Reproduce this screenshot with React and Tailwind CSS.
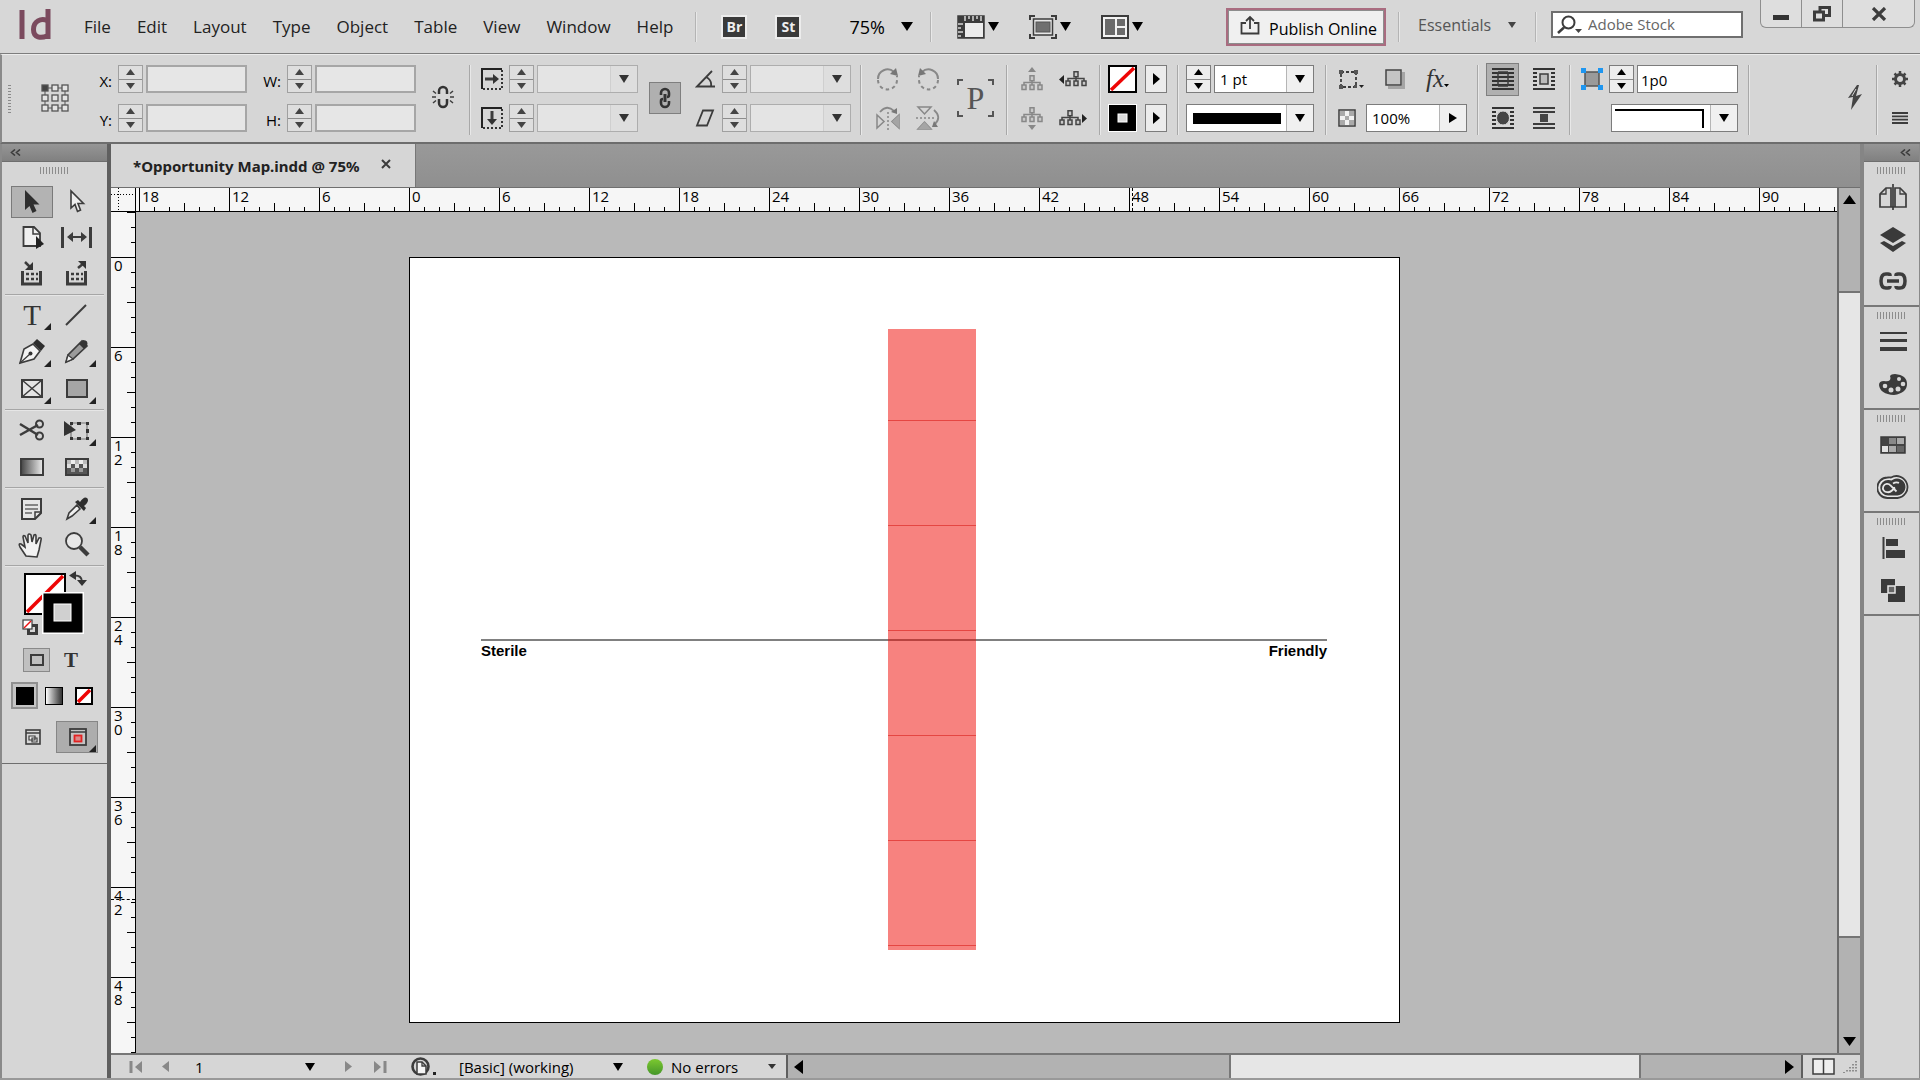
import React from "react";

const MENUS = ["File", "Edit", "Layout", "Type", "Object", "Table", "View", "Window", "Help"];
const H_LABELS = [18, 12, 6, 0, 6, 12, 18, 24, 30, 36, 42, 48, 54, 60, 66, 72, 78, 84, 90];
const V_LABELS = ["", "0", "6", "12", "18", "24", "30", "36", "42", "48"];

function Svg({ w, h, children, className = "" }) {
  return (
    <svg
      width={w}
      height={h}
      viewBox={`0 0 ${w} ${h}`}
      fill="none"
      stroke="#3c3c3c"
      strokeWidth="2"
      aria-hidden="true"
      className={"shrink-0 " + className}
    >
      {children}
    </svg>
  );
}

/* ---------- small shared parts ---------- */

function Down({ w = 12, h = 9, color = "#000", className = "" }) {
  return (
    <Svg w={w} h={h} className={className}>
      <path d={`M0 0H${w}L${w / 2} ${h}Z`} fill={color} stroke="none" />
    </Svg>
  );
}

function Right({ w = 8, h = 12, color = "#000" }) {
  return (
    <Svg w={w} h={h}>
      <path d={`M0 0V${h}L${w} ${h / 2}Z`} fill={color} stroke="none" />
    </Svg>
  );
}

function Left({ w = 8, h = 12, color = "#000" }) {
  return (
    <Svg w={w} h={h}>
      <path d={`M${w} 0V${h}L0 ${h / 2}Z`} fill={color} stroke="none" />
    </Svg>
  );
}

function Up({ w = 12, h = 9, color = "#000" }) {
  return (
    <Svg w={w} h={h}>
      <path d={`M0 ${h}H${w}L${w / 2} 0Z`} fill={color} stroke="none" />
    </Svg>
  );
}

function Sep({ className = "" }) {
  return <div className={"w-[2px] h-[70px] shrink-0 border-l border-[#a8a8a8] bg-[#e8e8e8] " + className} />;
}

function MenuSep({ className = "" }) {
  return <div className={"w-[2px] h-[30px] shrink-0 border-l border-[#b4b4b4] bg-[#e8e8e8] " + className} />;
}

function Spinner({ on, name }) {
  const c = on ? "#000" : "#444";
  return (
    <div
      className={
        "w-[25px] h-7 shrink-0 flex flex-col border " +
        (on ? "border-[#7c7c7c] bg-[#ededed]" : "border-[#a0a0a0] bg-[#dedede]")
      }
    >
      <button aria-label={name + " up"} className="flex-1 flex items-center justify-center">
        <Up w={9} h={6} color={c} />
      </button>
      <button
        aria-label={name + " down"}
        className="flex-1 flex items-center justify-center border-t border-[#8c8c8c]"
      >
        <Down w={9} h={6} color={c} />
      </button>
    </div>
  );
}

function Combo({ name, value = "", on, arrow = "down", className = "w-[101px]" }) {
  return (
    <div
      className={
        "h-7 shrink-0 flex border " +
        (on ? "border-[#7c7c7c] bg-white " : "border-[#adadad] bg-[#e4e4e4] ") +
        className
      }
    >
      <input
        aria-label={name}
        defaultValue={value}
        className="flex-1 min-w-0 bg-transparent px-[5px] pt-px text-[15px] outline-none"
      />
      <button
        aria-label={name + " options"}
        className={
          "w-[27px] shrink-0 flex items-center justify-center border-l " +
          (on ? "border-[#b5b5b5] bg-[#f0f0f0]" : "border-[#cfcfcf] bg-[#dedede]")
        }
      >
        {arrow === "down" ? <Down w={10} h={8} color={on ? "#000" : "#333"} /> : <Right w={8} h={10} />}
      </button>
    </div>
  );
}

function Field({ label, id, w }) {
  return (
    <div className="flex items-center h-7">
      <label htmlFor={id} className={"text-right text-[15px] pt-1 " + w}>
        {label}:
      </label>
      <div className="ml-[6px]">
        <Spinner name={label} />
      </div>
      <input id={id} className="ml-[3px] w-[101px] h-7 border-2 border-[#a6a6a6] bg-[#e6e6e6] px-1 text-[15px] outline-none" />
    </div>
  );
}

function IconButton({ name, children, className = "" }) {
  return (
    <button aria-label={name} className={"shrink-0 flex items-center justify-center " + className}>
      {children}
    </button>
  );
}

/* ---------- menu bar ---------- */

function RulersIcon() {
  return (
    <Svg w={28} h={24}>
      <rect x="1" y="1" width="26" height="22" fill="#3c3c3c" strokeWidth="1.5" />
      <rect x="8" y="8" width="18" height="14" fill="#ececec" stroke="none" />
      <path d="M8 1v5M12 1v3M16 1v5M20 1v3M24 1v5M1 9h5M1 13h3M1 17h5M1 21h3" stroke="#d6d6d6" strokeWidth="1.5" />
    </Svg>
  );
}

function ScreenModeIcon() {
  return (
    <Svg w={28} h={24}>
      <path d="M1 5V1h5M22 1h5v4M27 19v4h-5M6 23H1v-4" />
      <rect x="4.500" y="4" width="19" height="16" strokeWidth="1.5" fill="#e8e8e8" />
      <rect x="7" y="7" width="14" height="10" fill="#707070" stroke="#555" strokeWidth="1" />
    </Svg>
  );
}

function ArrangeIcon() {
  return (
    <Svg w={28} h={24}>
      <rect x="1" y="1" width="26" height="22" fill="#f2f2f2" />
      <path d="M4 4h10v16H4zM16 4h8v7h-8zM16 13h8v7h-8z" fill="#6a6a6a" stroke="none" />
    </Svg>
  );
}

function MenuBar() {
  return (
    <header className="flex items-center h-[54px] shrink-0 border-b border-[#7d7d7d] bg-[#d7d7d7]">
      <svg width="32" height="32" viewBox="0 0 32 32" className="ml-[19px] shrink-0 -mt-1" role="img" aria-label="InDesign">
        <path d="M3 1V30M29 0V30" stroke="#7b4a5e" strokeWidth="5" fill="none" />
        <path d="M28 11.500C22 9 14.500 12 14.500 20.500C14.500 29 22 29.500 28 27" stroke="#7b4a5e" strokeWidth="5" fill="none" />
      </svg>
      <nav className="flex ml-[33px] gap-[26px] text-[17px] text-[#222]">
        {MENUS.map((m) => (
          <button key={m}>{m}</button>
        ))}
      </nav>
      <MenuSep className="ml-[22px]" />
      <button className="ml-6 w-[26px] h-6 border-2 border-[#ececec] bg-[#3a3a3a] text-[14px] leading-4 font-bold text-[#eee]">
        <span className="block -mx-1">Br</span>
      </button>
      <button className="ml-7 w-[26px] h-6 border-2 border-[#ececec] bg-[#3a3a3a] text-[14px] leading-4 font-bold text-[#eee]">
        <span className="block -mx-1">St</span>
      </button>
      <div className="relative ml-12 flex items-center">
        <select aria-label="Zoom level" className="appearance-none w-[64px] text-[18px] leading-6 bg-transparent outline-none">
          <option>75%</option>
        </select>
        <Down w={12} h={9} className="absolute right-0 pointer-events-none" />
      </div>
      <MenuSep className="ml-[17px]" />
      <button aria-label="View options" className="ml-[25px] flex items-center gap-[3px]">
        <RulersIcon />
        <Down w={11} h={9} />
      </button>
      <button aria-label="Screen mode" className="ml-[30px] flex items-center gap-[3px]">
        <ScreenModeIcon />
        <Down w={11} h={9} />
      </button>
      <button aria-label="Arrange documents" className="ml-[30px] flex items-center gap-[3px]">
        <ArrangeIcon />
        <Down w={11} h={9} />
      </button>

      <button className="ml-auto w-[160px] h-[38px] border-[2px] border-[#a96c80] bg-[#f0f0f0] flex items-center pl-3 text-[16px] whitespace-nowrap outline-1 -outline-offset-3 outline-[#8d8d8d]">
        <Svg w={20} h={20} className="-mt-1">
          <path d="M6 8H1.500V18.500H18.500V8H14" strokeWidth="1.800" />
          <path d="M10 14V3M6 6l4-4 4 4" strokeWidth="1.800" />
        </Svg>
        <span className="ml-[9px] pt-1">Publish Online</span>
      </button>
      <MenuSep className="ml-3" />
      <div className="relative ml-[18px] flex items-center -mt-1">
        <select aria-label="Workspace" className="appearance-none w-[98px] text-[16px] text-[#555] bg-transparent outline-none">
          <option>Essentials</option>
        </select>
        <Down w={8} h={6} color="#444" className="absolute right-0 pointer-events-none" />
      </div>
      <MenuSep className="ml-[19px]" />
      <div className="ml-[14px] w-[192px] h-[27px] -mt-1 border-2 border-[#6f6f6f] bg-white flex items-center pl-1">
        <Svg w={27} h={19}>
          <circle cx="11.500" cy="7.500" r="6" />
          <path d="M7 12.500L1 18" strokeWidth="2.500" />
          <path d="M18 14h7l-3.500 4z" fill="#444" stroke="none" />
        </Svg>
        <input
          aria-label="Search Adobe Stock"
          placeholder="Adobe Stock"
          className="ml-1 flex-1 min-w-0 bg-transparent text-[15px] placeholder:text-[#666] outline-none"
        />
      </div>
      <div className="self-start ml-[17px] mr-[5px] flex h-7 border border-t-0 border-[#8e8e8e] rounded-b-md divide-x divide-[#8e8e8e] bg-[#dedede]">
        <IconButton name="Minimize" className="w-[41px]">
          <Svg w={16} h={6} className="mt-2">
            <rect x="0" y="0" width="16" height="5" fill="#333" stroke="none" />
          </Svg>
        </IconButton>
        <IconButton name="Restore" className="w-[41px]">
          <Svg w={18} h={16}>
            <path d="M7 5V1.500H16.500V9.500H12" strokeWidth="3" />
            <rect x="1.500" y="6" width="9" height="8" strokeWidth="3" />
          </Svg>
        </IconButton>
        <IconButton name="Close" className="w-[71px]">
          <Svg w={16} h={14}>
            <path d="M2 1l12 12M14 1L2 13" strokeWidth="3.200" />
          </Svg>
        </IconButton>
      </div>
    </header>
  );
}

/* ---------- control bar ---------- */

function RefPoint() {
  return (
    <Svg w={28} h={28}>
      <path d="M4 4h20v20H4z" strokeWidth="1" stroke="#555" />
      {[4, 14, 24].map((y) =>
        [4, 14, 24].map((x) => (
          <rect
            key={x + "-" + y}
            x={x - 3}
            y={y - 3}
            width="6"
            height="6"
            strokeWidth="1.300"
            stroke="#555"
            fill={x === 4 && y === 4 ? "#444" : "#e4e4e4"}
          />
        ))
      )}
    </Svg>
  );
}

function ScaleIcon({ vertical }) {
  return (
    <Svg w={22} h={22}>
      <path d={vertical ? "M21 1H1V21" : "M1 21V1H21"} stroke="#222" />
      <path d="M21 2V21H2" stroke="#333" strokeDasharray="2 2" />
      {vertical ? (
        <path d="M11 4V14" strokeWidth="3" />
      ) : (
        <path d="M4 11H13" strokeWidth="3" />
      )}
      <path d={vertical ? "M6 12h10l-5 6z" : "M12 6v10l6-5z"} fill="#333" stroke="none" />
    </Svg>
  );
}

function BrokenLink() {
  return (
    <Svg w={22} h={24}>
      <path d="M7 9V6a4 4 0 0 1 8 0V9M7 14v4a4 4 0 0 0 8 0V14" strokeWidth="2.500" stroke="#333" />
      <path d="M1 6l3 2.500M0 12h4M1 18l3-2.500M21 6l-3 2.500M22 12h-4M21 18l-3-2.500" strokeWidth="1.500" />
    </Svg>
  );
}

function ChainIcon() {
  return (
    <Svg w={14} h={22}>
      <path d="M3 8V6a4 4 0 0 1 8 0v2q0 2-2 2M11 14v2a4 4 0 0 1-8 0v-2q0-2 2-2" strokeWidth="2.600" stroke="#333" />
      <path d="M7 7v8" strokeWidth="3" stroke="#333" />
    </Svg>
  );
}

function RotateIcon({ ccw }) {
  return (
    <Svg w={24} h={24} className={ccw ? "-scale-x-100" : ""}>
      <path d="M2 12a9.500 9.500 0 0 1 16-7" stroke="#888" />
      <path d="M2 13a9.500 9.500 0 0 0 19 0V9" stroke="#888" strokeDasharray="3.500 3" />
      <path d="M14 7l6-6 2 8z" fill="#777" stroke="none" />
    </Svg>
  );
}

function FlipIcon({ vertical }) {
  return (
    <Svg w={24} h={24} className={vertical ? "rotate-90" : ""}>
      <path d="M1 9v13l7-6.500zM23 9v13l-7-6.500z" stroke="#888" strokeWidth="1.500" />
      <path d="M23 9v13l-7-6.500z" fill="#a5a5a5" stroke="none" />
      <path d="M12 6v18" stroke="#888" strokeDasharray="2 2" strokeWidth="1.500" />
      <path d="M4 6q7-8 14-1" stroke="#888" strokeWidth="1.800" />
      <path d="M15 6l6-4 0 6z" fill="#777" stroke="none" />
    </Svg>
  );
}

function Tree({ c, x, y }) {
  return (
    <g stroke={c} strokeWidth="1.500" fill="#c9c9c9">
      <path d={`M${x + 11} ${y + 5}V${y + 10}M${x + 3} ${y + 10}V${y + 7.5}H${x + 19}V${y + 10}`} fill="none" />
      <rect x={x + 9} y={y + 0.75} width="4" height="5" />
      <rect x={x + 1} y={y + 10} width="4" height="4.500" />
      <rect x={x + 9} y={y + 10} width="4" height="4.500" />
      <rect x={x + 17} y={y + 10} width="4" height="4.500" />
    </g>
  );
}

function WrapLines({ gap }) {
  const ys = [1, 5, 9, 13, 17, 21];
  return (
    <g stroke="#333">
      {ys.map((y, i) =>
        i === 0 || i === 5 || !gap ? (
          <path key={y} d={`M0 ${y}H22`} />
        ) : (
          <path key={y} d={`M0 ${y}H${gap}M${22 - gap} ${y}H22`} />
        )
      )}
    </g>
  );
}

function NoneSwatch({ w, h }) {
  return (
    <Svg w={w} h={h}>
      <rect x="1" y="1" width={w - 2} height={h - 2} fill="#fff" stroke="#000" />
      <path d={`M3 ${h - 3}L${w - 3} 3`} stroke="#ee0505" strokeWidth="3.500" />
    </Svg>
  );
}

function ArrowButton({ name }) {
  return (
    <IconButton name={name} className="w-[22px] h-7 border border-[#7c7c7c] bg-[#ececec]">
      <Right w={7} h={12} />
    </IconButton>
  );
}

function Rows({ children, className = "" }) {
  return <div className={"flex flex-col gap-[11px] shrink-0 " + className}>{children}</div>;
}

function Row({ children, className = "" }) {
  return <div className={"flex items-center h-7 " + className}>{children}</div>;
}

function ControlBar() {
  return (
    <section
      aria-label="Control"
      className="flex items-start h-[90px] shrink-0 pt-[10px] border-t border-l-2 border-t-[#ececec] border-l-[#8a8a8a] border-b-2 border-b-[#6d6d6d] bg-[#d6d6d6] overflow-hidden"
    >
      <div className="ml-[6px] mt-5 w-[3px] h-7 shrink-0 bg-[repeating-linear-gradient(180deg,#8a8a8a_0_1px,transparent_1px_3px)]" />
      <IconButton name="Reference point" className="ml-[30px] mt-[19px]">
        <RefPoint />
      </IconButton>
      <Rows className="ml-[25px]">
        <Field label="X" id="pos-x" w="w-[18px]" />
        <Field label="Y" id="pos-y" w="w-[18px]" />
      </Rows>
      <Rows className="ml-[14px]">
        <Field label="W" id="size-w" w="w-5" />
        <Field label="H" id="size-h" w="w-5" />
      </Rows>
      <IconButton name="Constrain proportions" className="ml-4 mt-5">
        <BrokenLink />
      </IconButton>
      <Sep className="ml-[15px]" />
      <Rows className="ml-[10px]">
        {[false, true].map((v) => (
          <Row key={String(v)}>
            <ScaleIcon vertical={v} />
            <div className="ml-[6px] mr-[3px]">
              <Spinner name={v ? "Scale Y" : "Scale X"} />
            </div>
            <Combo name={v ? "Scale Y" : "Scale X"} />
          </Row>
        ))}
      </Rows>
      <IconButton name="Link scaling" className="ml-[11px] mt-[17px] w-8 h-8 border border-[#7f7f7f] bg-[#b0b0b0]">
        <ChainIcon />
      </IconButton>
      <Rows className="ml-[14px]">
        <Row>
          <Svg w={21} h={18}>
            <path d="M17 1L2 16.500H20M11 7q6 3 5 9" strokeWidth="1.800" />
          </Svg>
          <div className="ml-[6px] mr-[3px]">
            <Spinner name="Rotation" />
          </div>
          <Combo name="Rotation" />
        </Row>
        <Row>
          <Svg w={21} h={18}>
            <path d="M2 16.500L8 1.500H18L12 16.500Z" strokeWidth="1.800" />
          </Svg>
          <div className="ml-[6px] mr-[3px]">
            <Spinner name="Shear" />
          </div>
          <Combo name="Shear" />
        </Row>
      </Rows>
      <Sep className="ml-[9px]" />
      <Rows className="ml-[14px]">
        <Row className="gap-4">
          <IconButton name="Rotate clockwise"><RotateIcon /></IconButton>
          <IconButton name="Rotate counter-clockwise"><RotateIcon ccw /></IconButton>
        </Row>
        <Row className="gap-4">
          <IconButton name="Flip horizontal"><FlipIcon /></IconButton>
          <IconButton name="Flip vertical"><FlipIcon vertical /></IconButton>
        </Row>
      </Rows>
      <div className="ml-[17px] mt-[14px] w-[37px] h-[38px] shrink-0 grid place-items-center">
        <Svg w={37} h={38} className="col-start-1 row-start-1">
          <path d="M1 6V1H6M31 1H36V6M36 32V37H31M6 37H1V32" stroke="#555" />
        </Svg>
        <span className="col-start-1 row-start-1 font-['Liberation_Serif',serif] text-[32px] leading-none text-[#555]">P</span>
      </div>
      <Sep className="ml-3" />
      <Rows className="ml-[13px]">
        <Row className="gap-4">
          <IconButton name="Select container">
            <Svg w={22} h={24}>
              <path d="M7 5h8l-4-5z" fill="#888" stroke="none" />
              <Tree c="#888" x={0} y={8} />
            </Svg>
          </IconButton>
          <IconButton name="Select previous object">
            <Svg w={28} h={16}>
              <path d="M5 4v9L0 8.500z" fill="#222" stroke="none" />
              <Tree c="#444" x={6} y={0} />
            </Svg>
          </IconButton>
        </Row>
        <Row className="gap-4">
          <IconButton name="Select content">
            <Svg w={22} h={24}>
              <Tree c="#888" x={0} y={1} />
              <path d="M7 19h8l-4 5z" fill="#888" stroke="none" />
            </Svg>
          </IconButton>
          <IconButton name="Select next object">
            <Svg w={28} h={16}>
              <Tree c="#444" x={0} y={0} />
              <path d="M23 4v9l5-4.500z" fill="#222" stroke="none" />
            </Svg>
          </IconButton>
        </Row>
      </Rows>
      <Sep className="ml-3" />
      <Rows className="ml-[7px]">
        <Row className="gap-2">
          <IconButton name="Fill"><NoneSwatch w={29} h={28} /></IconButton>
          <ArrowButton name="Fill options" />
        </Row>
        <Row className="gap-2">
          <IconButton name="Stroke">
            <Svg w={29} h={28}>
              <rect x="0" y="0" width="29" height="28" fill="#fff" stroke="none" />
              <rect x="1" y="1" width="27" height="26" fill="#000" stroke="none" />
              <rect x="10" y="10" width="9" height="8" fill="#ddd" stroke="#fff" strokeWidth="1" />
            </Svg>
          </IconButton>
          <ArrowButton name="Stroke options" />
        </Row>
      </Rows>
      <Sep className="ml-[10px]" />
      <Rows className="ml-[7px]">
        <Row className="gap-[3px]">
          <Spinner on name="Stroke weight" />
          <Combo on name="Stroke weight" value="1 pt" className="w-[100px]" />
        </Row>
        <Row>
          <button aria-label="Stroke type" className="w-32 h-7 flex border border-[#7c7c7c] bg-white">
            <span className="flex-1 self-center h-[11px] ml-[6px] mr-[5px] bg-black" />
            <span className="w-[27px] self-stretch flex items-center justify-center border-l border-[#b5b5b5] bg-[#f0f0f0]">
              <Down w={10} h={8} />
            </span>
          </button>
        </Row>
      </Rows>
      <Sep className="ml-[11px]" />
      <Rows className="ml-[11px]">
        <Row>
          <IconButton name="Corner options">
            <Svg w={26} h={20}>
              <rect x="3" y="3" width="15" height="15" strokeDasharray="3 2" strokeWidth="1.800" />
              <path d="M1 1h4v4H1zM16 1h4v4h-4zM1 16h4v4H1zM16 16h3v3h-3z" fill="#555" stroke="none" />
              <path d="M21 16h5l-2.500 3z" fill="#222" stroke="none" />
            </Svg>
          </IconButton>
          <IconButton name="Drop shadow" className="ml-5">
            <Svg w={22} h={22}>
              <path d="M4 19.500H19.500V4" strokeWidth="3" stroke="#a5a5a5" />
              <rect x="2" y="2" width="15" height="15" fill="#c4c4c4" strokeWidth="1.500" stroke="#444" />
            </Svg>
          </IconButton>
          <button aria-label="Effects" className="ml-5 flex items-end h-7">
            <span className="font-['Liberation_Serif',serif] italic text-[25px] leading-7 text-[#333]">fx</span>
            <Down w={5} h={3} className="mb-[6px]" />
          </button>
        </Row>
        <Row>
          <Svg w={18} h={18}>
            <rect x="1" y="1" width="16" height="16" fill="#f2f2f2" strokeWidth="1.500" />
            <path d="M2 2h5v5H2zM11 2h5v5h-5zM7 7h4v4H7zM2 11h5v5H2zM11 11h5v5h-5z" fill="#aaa" stroke="none" />
          </Svg>
          <Combo on name="Opacity" value="100%" arrow="right" className="ml-[10px] w-[101px]" />
        </Row>
      </Rows>
      <Sep className="ml-[10px]" />
      <Rows className="ml-[7px]">
        <Row className="gap-2">
          <IconButton name="No text wrap" className="w-[33px] h-[33px] border border-[#7f7f7f] bg-[#b0b0b0]">
            <Svg w={22} h={22}>
              <WrapLines />
              <path d="M6 4v14M16 4v14M6 4h10M6 18h10" strokeWidth="1.500" />
            </Svg>
          </IconButton>
          <IconButton name="Wrap around bounding box" className="w-[33px] h-7">
            <Svg w={22} h={22}>
              <WrapLines gap={4} />
              <rect x="7" y="6" width="8" height="10" fill="#bbb" strokeWidth="1.500" />
            </Svg>
          </IconButton>
        </Row>
        <Row className="gap-2">
          <IconButton name="Wrap around object shape" className="w-[33px] h-7">
            <Svg w={22} h={22}>
              <WrapLines gap={4} />
              <ellipse cx="11" cy="11" rx="6.500" ry="7" fill="#444" stroke="#d6d6d6" strokeWidth="1" />
            </Svg>
          </IconButton>
          <IconButton name="Jump object" className="w-[33px] h-7">
            <Svg w={22} h={22}>
              <path d="M0 1H22M0 5H22M0 17H22M0 21H22" />
              <rect x="7" y="7" width="8" height="8" fill="#444" stroke="none" />
            </Svg>
          </IconButton>
        </Row>
      </Rows>
      <Sep className="ml-[9px]" />
      <Rows className="ml-[10px]">
        <Row>
          <Svg w={22} h={22}>
            <rect x="4" y="4" width="14" height="14" fill="#9a9a9a" strokeWidth="1.500" stroke="#555" />
            <path d="M0 0h5v5H0zM17 0h5v5h-5zM0 17h5v5H0zM17 17h5v5h-5z" fill="#1e96f0" stroke="none" />
          </Svg>
          <div className="ml-[6px] mr-[3px]">
            <Spinner on name="Corner size" />
          </div>
          <input
            aria-label="Corner size"
            defaultValue="1p0"
            className="w-[101px] h-7 border border-[#7c7c7c] bg-white px-[3px] pt-px text-[15px] outline-none"
          />
        </Row>
        <Row>
          <button aria-label="Corner shape" className="ml-[30px] w-[127px] h-7 flex border border-[#7c7c7c] bg-white">
            <span className="flex-1 self-stretch mt-1 mb-[3px] ml-[3px] mr-[6px] border-t-2 border-r-2 border-black" />
            <span className="w-[27px] self-stretch flex items-center justify-center border-l border-[#b5b5b5] bg-[#f0f0f0]">
              <Down w={10} h={8} />
            </span>
          </button>
        </Row>
      </Rows>
      <Sep className="ml-[10px]" />
      <IconButton name="Quick apply" className="ml-auto mt-5">
        <Svg w={16} h={25}>
          <path d="M10 0L1 13l5-1L4 25L15 9l-6 2L12 0z" fill="#444" stroke="none" />
          <path d="M9 4L5 11" stroke="#d6d6d6" strokeWidth="1" />
        </Svg>
      </IconButton>
      <Sep className="ml-[13px]" />
      <Rows className="ml-[14px] mr-3">
        <Row>
          <IconButton name="Customize">
            <Svg w={16} h={16}>
              <circle cx="8" cy="8" r="4.500" strokeWidth="3" stroke="#444" />
              <path d="M8 0v3M8 13v3M0 8h3M13 8h3M2.500 2.500l2 2M11.500 11.500l2 2M13.500 2.500l-2 2M4.500 11.500l-2 2" stroke="#444" strokeWidth="2.500" />
            </Svg>
          </IconButton>
        </Row>
        <Row>
          <IconButton name="Control menu">
            <Svg w={16} h={12}>
              <path d="M0 1H16M0 4.300H16M0 7.600H16M0 11H16" strokeWidth="1.800" />
            </Svg>
          </IconButton>
        </Row>
      </Rows>
    </section>
  );
}

/* ---------- toolbox ---------- */

function Corner() {
  return <path d="M40 24v7h-7z" fill="#222" stroke="none" />;
}

function Tool({ name, active, children }) {
  return (
    <button
      aria-label={name}
      className={"w-[42px] h-8 shrink-0 " + (active ? "bg-[#b3b3b3] outline-1 -outline-offset-1 outline-[#7a7a7a]" : "")}
    >
      <Svg w={42} h={32}>{children}</Svg>
    </button>
  );
}

function Grip() {
  return (
    <div className="w-[29px] h-[7px] mx-auto bg-[repeating-linear-gradient(90deg,#8c8c8c_0_1px,transparent_1px_3px)]" />
  );
}

function PanelHeader({ className = "" }) {
  return (
    <div className={"h-[18px] shrink-0 flex items-center px-2 border-b border-[#6e6e6e] bg-linear-to-b from-[#969696] to-[#808080] " + className}>
      <button aria-label="Collapse panels">
        <Svg w={11} h={7}>
          <path d="M5 0.500L1.500 3.500L5 6.500M10 0.500L6.500 3.500L10 6.500" strokeWidth="1.600" />
        </Svg>
      </button>
    </div>
  );
}

function Rule({ className = "" }) {
  return <div className={"mx-[3px] h-[2px] border-t border-[#a6a6a6] bg-[#e6e6e6] " + className} />;
}

const GRID = "grid grid-cols-[42px_42px] gap-x-[3px] ml-[9px] ";

function Toolbox() {
  return (
    <aside className="w-[111px] shrink-0 flex flex-col border-l-2 border-[#8a8a8a] border-r-4 border-r-[#5f5f5f] bg-[#d6d6d6]">
      <PanelHeader />
      <div className="mt-[5px]">
        <Grip />
      </div>
      <div className={GRID + "gap-y-1 mt-3"}>
        <Tool name="Selection" active>
          <path d="M14 4V24L18.500 20L21.500 27L25.500 25L22.500 18.500H28.500Z" fill="#2e2e2e" stroke="none" />
        </Tool>
        <Tool name="Direct selection">
          <path d="M15 5V22L19 18.500L21.500 25.500L24.500 24L22 17.500H27.500Z" fill="#eee" strokeWidth="1.600" />
        </Tool>
        <Tool name="Page">
          <path d="M12.500 5H23L29 11V24H12.500Z" fill="#efefef" strokeWidth="1.800" />
          <path d="M22 5V12H29" strokeWidth="1.500" />
          <path d="M25 14V27L33 22Z" fill="#222" stroke="none" />
        </Tool>
        <Tool name="Gap">
          <path d="M6.500 5V26M34.500 5V26" strokeWidth="3" />
          <path d="M13 15H29" />
          <path d="M17 10L11 15L17 20ZM25 10L31 15L25 20Z" fill="#3c3c3c" stroke="none" />
        </Tool>
        <Tool name="Content collector">
          <path d="M11.500 13V26H29.500V13" strokeWidth="3" />
          <path d="M15 16H27M15 21H27" strokeWidth="2.500" strokeDasharray="3 2" />
          <path d="M14 4L20 10" strokeWidth="2.500" />
          <path d="M22 4V12H14Z" fill="#333" stroke="none" />
        </Tool>
        <Tool name="Content placer">
          <path d="M11.500 13V26H29.500V13" strokeWidth="3" />
          <path d="M15 16H27M15 21H27" strokeWidth="2.500" strokeDasharray="3 2" />
          <path d="M22 10L28 5" strokeWidth="2.500" />
          <path d="M30 3V11L22 3Z" fill="#333" stroke="none" />
        </Tool>
      </div>
      <Rule className="mt-1" />
      <div className={GRID + "gap-y-[5px] mt-[3px]"}>
        <button aria-label="Type" className="w-[42px] h-8 grid place-items-center">
          <span className="col-start-1 row-start-1 font-['Liberation_Serif',serif] text-[29px] leading-none text-[#333]">T</span>
          <Svg w={42} h={32} className="col-start-1 row-start-1"><Corner /></Svg>
        </button>
        <Tool name="Line">
          <path d="M10 26L30 6" />
        </Tool>
        <Tool name="Pen">
          <path d="M9 27L13 13L22 8L29 15L23 23Z" fill="#f4f4f4" strokeWidth="1.600" />
          <path d="M9 27L19 18" strokeWidth="1.300" />
          <circle cx="19.500" cy="17.500" r="2" fill="#333" stroke="none" />
          <path d="M22 7L26 3L34 10L30 15Z" fill="#2e2e2e" stroke="none" />
          <Corner />
        </Tool>
        <Tool name="Pencil">
          <path d="M10 26L12 19L26 5L31 10L17 23Z" fill="#9b9b9b" strokeWidth="1.600" />
          <path d="M10 26L12 19L17 23Z" fill="#f2f2f2" strokeWidth="1.300" />
          <path d="M23 8L27 4Q33 4 31 10L28 13Z" fill="#333" stroke="none" />
          <Corner />
        </Tool>
        <Tool name="Rectangle frame">
          <rect x="11" y="7" width="20" height="17" fill="#e4e4e4" />
          <path d="M11 7L31 24M31 7L11 24" strokeWidth="1.500" />
          <Corner />
        </Tool>
        <Tool name="Rectangle">
          <rect x="11" y="7" width="20" height="17" fill="#a6a6a6" />
          <Corner />
        </Tool>
      </div>
      <Rule className="mt-1" />
      <div className={GRID + "gap-y-1 mt-1"}>
        <Tool name="Scissors">
          <path d="M9 9L27 20M9 20L27 10" strokeWidth="2.500" />
          <circle cx="28.500" cy="9" r="3.500" />
          <circle cx="28.500" cy="21" r="3.500" />
        </Tool>
        <Tool name="Free transform">
          <path d="M15 8H31V24H15Z" strokeWidth="1.200" stroke="#777" />
          <path d="M8 6V21L20 15Z" fill="#333" stroke="none" />
          <path d="M14 7h3v3h-3zM21 7h4v3h-4zM30 7h3v3h-3zM30 14h3v4h-3zM30 22h3v3h-3zM21 22h4v3h-4zM14 22h3v3h-3z" fill="#333" stroke="none" />
          <Corner />
        </Tool>
        <Tool name="Gradient swatch">
          <defs>
            <linearGradient id="grad-tool">
              <stop offset="0" stopColor="#444" />
              <stop offset="1" stopColor="#eee" />
            </linearGradient>
          </defs>
          <rect x="10" y="8" width="22" height="16" fill="url(#grad-tool)" />
        </Tool>
        <Tool name="Gradient feather">
          <rect x="10" y="8" width="22" height="16" fill="#555" />
          <path d="M15 9h4v4h-4zM23 9h4v4h-4z" fill="#eee" stroke="none" />
          <path d="M11 9h4v4h-4zM19 9h4v4h-4zM27 9h4v4h-4z" fill="#bbb" stroke="none" />
          <path d="M11 13h4v4h-4zM19 13h4v4h-4zM27 13h4v4h-4z" fill="#ddd" stroke="none" />
          <path d="M15 17h4v4h-4zM23 17h4v4h-4z" fill="#999" stroke="none" />
        </Tool>
      </div>
      <Rule className="mt-1" />
      <div className={GRID + "gap-y-1 mt-1"}>
        <Tool name="Note">
          <path d="M11 6H30V20L24 26H11Z" fill="#e6e6e6" />
          <path d="M30 19H24V26" strokeWidth="1.500" />
          <path d="M14 12H27M14 16H27M14 20H21" strokeWidth="1.500" stroke="#666" />
        </Tool>
        <Tool name="Eyedropper">
          <path d="M11 26L13 20L21 12L24 16L16 23Z" fill="#f0f0f0" strokeWidth="1.600" />
          <path d="M19 9L28 18L30 15L28 13Q34 8 31 5Q28 3 24 9L22 7Z" fill="#2e2e2e" stroke="none" />
          <Corner />
        </Tool>
        <Tool name="Hand">
          <path
            d="M15 27L9 18Q7 14 10 15L14 18L12 8Q12 6 14 7L17 14V6Q18 4 20 6L21 13L23 6Q25 5 25 7V15L28 9Q31 8 30 11L28 21L26 28Z"
            fill="#f2f2f2"
            strokeWidth="1.600"
          />
        </Tool>
        <Tool name="Zoom">
          <circle cx="18" cy="12" r="8" fill="#e8e8e8" strokeWidth="1.800" />
          <path d="M24 18L32 26" strokeWidth="4.500" />
        </Tool>
      </div>
      <Rule className="mt-1" />
      <div className="relative h-[66px] mt-[5px]">
        <button aria-label="Fill colour" className="absolute left-[22px] top-px">
          <NoneSwatch w={42} h={42} />
        </button>
        <button aria-label="Stroke colour" className="absolute left-10 top-5">
          <Svg w={42} h={42}>
            <rect x="0" y="0" width="42" height="42" fill="#fff" stroke="none" />
            <rect x="2" y="2" width="38" height="38" fill="#000" stroke="#000" strokeWidth="1" />
            <rect x="12" y="12" width="17" height="17" fill="#d0d0d0" stroke="#fff" strokeWidth="1" />
          </Svg>
        </button>
        <button aria-label="Swap fill and stroke" className="absolute left-[67px] -top-px">
          <Svg w={18} h={16}>
            <path d="M5 4.500Q13 4 13 11" />
            <path d="M7 0V9L0 4.500ZM8 9H18L13 15Z" fill="#333" stroke="none" />
          </Svg>
        </button>
        <button aria-label="Default fill and stroke" className="absolute left-5 top-[47px]">
          <Svg w={16} h={16}>
            <rect x="6.500" y="6.500" width="8" height="8" strokeWidth="3" />
            <rect x="1" y="1" width="9" height="9" fill="#fff" strokeWidth="1.200" />
            <path d="M2 9L9 2" stroke="#e11" strokeWidth="1.500" />
          </Svg>
        </button>
      </div>
      <div className="flex items-center h-6 mt-[10px] ml-[21px]">
        <IconButton name="Formatting affects container" className="w-[27px] h-6 border border-[#8a8a8a] bg-[#c0c0c0]">
          <Svg w={14} h={12}>
            <rect x="1" y="1" width="12" height="10" />
          </Svg>
        </IconButton>
        <button aria-label="Formatting affects text" className="ml-[14px] font-['Liberation_Serif',serif] font-bold text-[21px] leading-none text-[#333]">
          T
        </button>
      </div>
      <div className="flex items-center h-[27px] mt-[10px] ml-[9px]">
        <IconButton name="Apply colour" className="w-[27px] h-[27px] border-2 border-[#909090] bg-[#c4c4c4]">
          <span className="w-[18px] h-[18px] bg-black" />
        </IconButton>
        <button aria-label="Apply gradient" className="ml-[7px] w-[18px] h-[18px] border border-black bg-linear-to-r from-white to-[#333]" />
        <IconButton name="Apply none" className="ml-3">
          <NoneSwatch w={18} h={18} />
        </IconButton>
      </div>
      <div className="flex items-center h-8 mt-[12px] ml-[9px]">
        <IconButton name="Normal view" className="ml-[14px] w-4">
          <Svg w={16} h={16}>
            <rect x="1" y="1" width="14" height="14" fill="#d8d8d8" strokeWidth="1.600" />
            <path d="M1 4H15" strokeWidth="1.500" />
            <path d="M4 7h6v4H4zM7 9h5v4H7z" strokeWidth="1.200" fill="#eee" />
          </Svg>
        </IconButton>
        <button aria-label="Preview mode" className="ml-[15px] w-[42px] h-8 bg-[#adadad] outline-1 -outline-offset-1 outline-[#868686]">
          <Svg w={42} h={32}>
            <rect x="14" y="8" width="16" height="16" fill="#c4c4c4" strokeWidth="1.800" />
            <path d="M14 11H30" strokeWidth="1.500" />
            <rect x="18.500" y="14.500" width="7" height="6" fill="#d88" stroke="#e32222" strokeWidth="1.800" />
            <Corner />
          </Svg>
        </button>
      </div>
      <div className="mt-[10px] border-t border-[#6e6e6e] flex-1" />
    </aside>
  );
}

/* ---------- rulers, canvas, document ---------- */

const TICKS = [1, 2, 3, 4, 5];

function HRuler() {
  return (
    <div className="relative flex-1 min-w-0 h-6 overflow-hidden border-b border-black bg-[#f6f6f6]">
      <div className="flex h-full pl-[3px]">
        {H_LABELS.map((n, i) => (
          <div key={i} className="w-[90px] h-full shrink-0 border-l border-black grid">
            <span className="col-start-1 row-start-1 pl-[2px] text-[15px] leading-4">{n}</span>
            <div className="col-start-1 row-start-1 flex items-end">
              {TICKS.map((k) => (
                <div key={k} className={"w-[15px] border-r border-black " + (k === 3 ? "h-2" : "h-1")} />
              ))}
            </div>
          </div>
        ))}
      </div>
      <div className="absolute left-[996px] inset-y-0 border-l border-dashed border-black" />
    </div>
  );
}

function VRuler() {
  return (
    <div className="relative w-[25px] shrink-0 overflow-hidden border-r border-black bg-[#f6f6f6]">
      <div className="absolute inset-x-0 -top-[45px]">
        {V_LABELS.map((n, i) => (
          <div key={i} className="h-[90px] border-t border-black flex justify-between">
            <div className="ml-[3px] w-[9px] break-all text-[15px] leading-[14px]">{n}</div>
            <div className="flex flex-col items-end">
              {TICKS.map((k) => (
                <div key={k} className={"h-[15px] border-b border-black " + (k === 3 ? "w-2" : "w-1")} />
              ))}
            </div>
          </div>
        ))}
      </div>
      <div className="absolute inset-x-0 top-[687px] border-t border-dashed border-black" />
    </div>
  );
}

function Canvas() {
  return (
    <main className="relative flex-1 min-w-0 overflow-hidden bg-[#b9b9b9]">
      <div className="absolute left-[273px] top-[45px] w-[991px] h-[766px] border border-black bg-white font-['Liberation_Sans',Arial,sans-serif]">
        <div className="absolute left-[71px] top-[381px] w-[846px]">
          <div className="h-[2px] bg-[#808080]" />
          <div className="flex justify-between pt-px text-[15px] leading-[17px] font-bold text-black">
            <span>Sterile</span>
            <span>Friendly</span>
          </div>
        </div>
        <div className="absolute left-[478px] top-[71px] w-[88px] flex flex-col bg-[#f00600]/50">
          <div className="h-[92px] border-b border-[#dd2c28]/70" />
          {[1, 2, 3, 4, 5].map((k) => (
            <div key={k} className="h-[105px] border-b border-[#dd2c28]/70" />
          ))}
          <div className="h-1" />
        </div>
      </div>
    </main>
  );
}

function VScroll() {
  return (
    <div className="w-[23px] shrink-0 flex flex-col border-l-2 border-[#6a6a6a] bg-[#b2b2b2]">
      <button aria-label="Scroll up" className="h-[22px] flex items-center justify-center">
        <Up w={13} h={9} />
      </button>
      <div className="grow-[81] basis-0" />
      <div className="grow-[647] basis-0 border-y-2 border-[#747474] bg-[#e6e6e6]" />
      <div className="grow-[92] basis-0" />
      <button aria-label="Scroll down" className="h-6 flex items-center justify-center">
        <Down w={13} h={9} />
      </button>
    </div>
  );
}

function StatusBar() {
  return (
    <footer className="flex items-center h-[25px] shrink-0 border-t-2 border-[#777] bg-[#d6d6d6] text-[15px]">
      <IconButton name="First page" className="ml-[18px]">
        <Svg w={14} h={12}>
          <path d="M2 0V12" stroke="#888" strokeWidth="3" />
          <path d="M13 0V12L6 6Z" fill="#888" stroke="none" />
        </Svg>
      </IconButton>
      <IconButton name="Previous page" className="ml-[19px]"><Left w={7} h={11} color="#888" /></IconButton>
      <div className="relative ml-[26px] flex items-center">
        <select aria-label="Page" className="appearance-none w-[120px] leading-5 bg-transparent outline-none">
          <option>1</option>
        </select>
        <Down w={10} h={8} className="absolute right-0 pointer-events-none" />
      </div>
      <IconButton name="Next page" className="ml-[30px]"><Right w={7} h={11} color="#888" /></IconButton>
      <IconButton name="Last page" className="ml-[21px]">
        <Svg w={14} h={12}>
          <path d="M12 0V12" stroke="#888" strokeWidth="3" />
          <path d="M1 0V12L8 6Z" fill="#888" stroke="none" />
        </Svg>
      </IconButton>
      <IconButton name="Open structure" className="ml-6">
        <Svg w={26} h={20}>
          <circle cx="9.500" cy="9.500" r="8" strokeWidth="2.600" />
          <path d="M6 5H11L15 9V17H6Z" fill="#f4f4f4" strokeWidth="1.500" />
          <path d="M11 5V9H15" strokeWidth="1.300" />
          <rect x="22" y="15" width="3" height="3" fill="#222" stroke="none" />
        </Svg>
      </IconButton>
      <div className="relative ml-[22px] flex items-center">
        <select aria-label="Preflight profile" className="appearance-none w-[164px] leading-5 bg-transparent outline-none">
          <option>[Basic] (working)</option>
        </select>
        <Down w={10} h={8} className="absolute right-0 pointer-events-none" />
      </div>
      <span className="ml-6 w-4 h-4 rounded-full bg-linear-to-b from-[#7cc92f] to-[#45962a]" />
      <button className="ml-2 flex items-center">
        <span className="w-[97px] text-left leading-5">No errors</span>
        <Down w={8} h={5} color="#333" />
      </button>
      <div className="ml-[10px] flex-1 self-stretch flex border-x-2 border-[#5f5f5f] bg-[#b2b2b2]">
        <button aria-label="Scroll left" className="w-5 flex items-center justify-center"><Left w={9} h={14} /></button>
        <div className="grow-[423] basis-0" />
        <div className="grow-[410] basis-0 border-x-2 border-[#777] bg-[#e6e6e6]" />
        <div className="grow-[137] basis-0" />
        <button aria-label="Scroll right" className="w-6 flex items-center justify-center"><Right w={9} h={14} /></button>
      </div>
      <IconButton name="Split layout view" className="ml-[9px]">
        <Svg w={23} h={17}>
          <rect x="1" y="1" width="21" height="15" fill="#eee" strokeWidth="1.500" />
          <path d="M11.500 1V16" strokeWidth="1.500" />
        </Svg>
      </IconButton>
      <Svg w={14} h={14} className="ml-2 mr-[3px]">
        <path d="M13 1V13M10 4V13M7 7V13M4 10V13M1 12V13" stroke="#777" strokeWidth="1.500" strokeDasharray="1.500 1.500" />
      </Svg>
    </footer>
  );
}

function DocumentArea() {
  return (
    <div className="flex-1 min-w-0 flex flex-col">
      <div className="flex h-11 shrink-0 border-b border-[#6f6f6f] bg-linear-to-b from-[#999] to-[#8f8f8f]">
        <div className="flex items-center pl-[22px] pr-6 bg-[#d6d6d6] border-r border-[#777]">
          <h1 className="font-['Noto_Sans','Open_Sans',sans-serif] text-[15px] font-bold text-[#222] pt-[2px]">
            *Opportunity Map.indd @ 75%
          </h1>
          <button aria-label="Close document" className="ml-[21px] -mt-[3px]">
            <Svg w={10} h={10}>
              <path d="M1 1l8 8M9 1L1 9" />
            </Svg>
          </button>
        </div>
      </div>
      <div className="flex-1 min-h-0 flex">
        <div className="flex-1 min-w-0 flex flex-col">
          <div className="flex shrink-0">
            <div className="w-[25px] h-6 shrink-0 border-r border-b border-black bg-[#f6f6f6]">
              <Svg w={24} h={23}>
                <path d="M7.500 0V23M0 6.500H24" stroke="#000" strokeWidth="1" strokeDasharray="1 2" />
              </Svg>
            </div>
            <HRuler />
          </div>
          <div className="flex-1 min-h-0 flex">
            <VRuler />
            <Canvas />
          </div>
        </div>
        <VScroll />
      </div>
      <StatusBar />
    </div>
  );
}

/* ---------- right dock ---------- */

function DockGroup({ children }) {
  return (
    <div className="border-b-2 border-[#787878] pt-[5px] pb-[3px]">
      <Grip />
      <div className="flex flex-col items-center pt-[2px] pl-[3px]">{children}</div>
    </div>
  );
}

function DockIcon({ name, children }) {
  return (
    <IconButton name={name} className="w-10 h-[42px]">
      <Svg w={32} h={28}>{children}</Svg>
    </IconButton>
  );
}

function Dock() {
  return (
    <aside className="w-[60px] shrink-0 flex flex-col border-l-4 border-l-[#858585] border-r border-r-[#8a8a8a] bg-[#d6d6d6]">
      <PanelHeader className="justify-end" />
      <DockGroup>
        <DockIcon name="Pages">
          <path d="M16 1V27M3 24V11L9 5H14V24ZM18 5H23L29 11V24H18ZM3 24H29" strokeWidth="1.700" />
          <path d="M9 5V11H3M23 5V11H29" strokeWidth="1.300" />
        </DockIcon>
        <DockIcon name="Layers">
          <path d="M16 2L29 10L16 18L3 10Z" fill="#3a3a3a" stroke="none" />
          <path d="M3 18L7 16L16 21L25 16L29 18L16 27Z" fill="#3a3a3a" stroke="none" />
        </DockIcon>
        <DockIcon name="Links">
          <path d="M13 9V8Q13 7 11 7H9Q4 7 4 14T9 21H11Q13 21 13 19M19 9V8Q19 7 21 7H23Q28 7 28 14T23 21H21Q19 21 19 19" strokeWidth="3.500" />
          <path d="M10 14H22" strokeWidth="3.500" />
        </DockIcon>
      </DockGroup>
      <DockGroup>
        <DockIcon name="Stroke">
          <path d="M3 5H30" strokeWidth="2" />
          <path d="M3 12.500H30" strokeWidth="3" />
          <path d="M3 21H30" strokeWidth="4" />
        </DockIcon>
        <DockIcon name="Color">
          <path d="M13 6Q14 4 18 4Q30 5 30 14T17 25Q3 24 2 15Q2 11 7 11Q11 12 13 10Q14 8 13 6Z" fill="#3a3a3a" stroke="none" />
          <g fill="#d6d6d6" stroke="none">
            <circle cx="8" cy="16" r="2.300" />
            <circle cx="14" cy="20" r="2.500" />
            <circle cx="21" cy="19" r="2.500" />
            <circle cx="26" cy="14" r="2.300" />
            <circle cx="22" cy="9" r="2" />
          </g>
        </DockIcon>
      </DockGroup>
      <DockGroup>
        <DockIcon name="Swatches">
          <rect x="4" y="6" width="24" height="16" fill="#444" strokeWidth="1.500" />
          <path d="M12 7h7v6h-7z" fill="#888" stroke="none" />
          <path d="M20 7h7v6h-7z" fill="#aaa" stroke="none" />
          <path d="M5 15h6v6H5z" fill="#e2e2e2" stroke="none" />
          <path d="M12 15h7v6h-7z" fill="#aaa" stroke="none" />
          <path d="M20 15h7v6h-7z" fill="#666" stroke="none" />
        </DockIcon>
        <DockIcon name="CC Libraries">
          <path
            d="M10.500 4.500A10 10 0 0 0 10.500 25H20.500A11 11 0 1 0 14 4.500Q12.500 4.200 10.500 4.500Z"
            strokeWidth="1.800"
            fill="#e6e6e6"
          />
          <path d="M11 7A7.700 7.700 0 0 0 11 22.500H20.500A8.500 8.500 0 1 0 14.500 7.500Q13 6.800 11 7Z" fill="#3a3a3a" stroke="none" />
          <path
            d="M19.500 18.500L13.500 12.500A4.200 4.200 0 1 0 10.500 19.200Q13 19.500 15 17.500L18 14.500M16 10.500Q19 8.500 22 9.800"
            stroke="#e6e6e6"
            strokeWidth="1.800"
          />
        </DockIcon>
      </DockGroup>
      <DockGroup>
        <DockIcon name="Align">
          <path d="M6.500 3V25" />
          <rect x="9" y="5" width="12" height="7" fill="#3a3a3a" stroke="none" />
          <rect x="9" y="16" width="19" height="8" fill="#3a3a3a" stroke="none" />
        </DockIcon>
        <DockIcon name="Pathfinder">
          <path d="M4 3h14v14H4z" fill="#3a3a3a" stroke="none" />
          <path d="M11 10h17v16H11z" fill="#3a3a3a" stroke="none" />
          <rect x="11" y="10" width="7" height="7" fill="#666" stroke="#e6e6e6" strokeWidth="1.500" />
        </DockIcon>
      </DockGroup>
      <div className="flex-1" />
    </aside>
  );
}

export default function App() {
  return (
    <div className="h-screen flex flex-col overflow-hidden bg-[#d6d6d6] text-black font-['Open_Sans','Noto_Sans',sans-serif]">
      <MenuBar />
      <ControlBar />
      <div className="flex-1 min-h-0 flex border-b-2 border-[#999]">
        <Toolbox />
        <DocumentArea />
        <Dock />
      </div>
    </div>
  );
}
